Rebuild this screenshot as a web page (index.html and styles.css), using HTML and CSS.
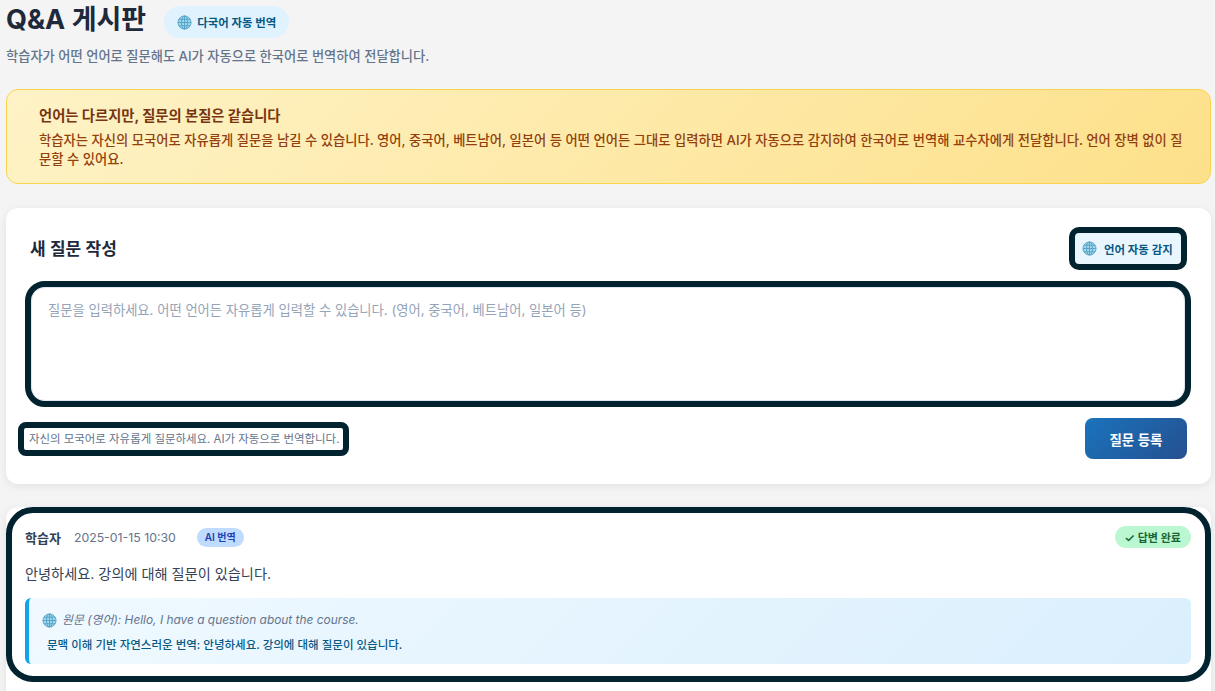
FILE: index.html
```html
<!DOCTYPE html>
<html lang="ko">
<head>
    <meta charset="UTF-8">
    <meta name="viewport" content="width=device-width, initial-scale=1.0">
    <title>Q&amp;A 게시판</title>
    <link rel="stylesheet" href="styles.css">
</head>
<body>
    <svg class="defs" width="0" height="0" aria-hidden="true">
        <symbol id="globe" viewBox="0 0 16 16">
            <circle cx="8" cy="8" r="7" fill="#9ed6ea"/>
            <g fill="none" stroke="#4f9fc4" stroke-width="0.9">
                <circle cx="8" cy="8" r="7"/>
                <ellipse cx="8" cy="8" rx="3.2" ry="7"/>
                <path d="M8 1v14M1 8h14M2 4.5h12M2 11.5h12"/>
            </g>
        </symbol>
    </svg>

    <div class="page">
        <header class="page-head">
            <div class="title-row">
                <h1>Q&amp;A 게시판</h1>
                <span class="pill pill-title"><svg class="globe"><use href="#globe"/></svg>다국어 자동 번역</span>
            </div>
            <p class="subtitle">학습자가 어떤 언어로 질문해도 AI가 자동으로 한국어로 번역하여 전달합니다.</p>
        </header>

        <div class="notice">
            <strong>언어는 다르지만, 질문의 본질은 같습니다</strong>
            <p>학습자는 자신의 모국어로 자유롭게 질문을 남길 수 있습니다. 영어, 중국어, 베트남어, 일본어 등 어떤 언어든 그대로 입력하면 AI가 자동으로 감지하여 한국어로 번역해 교수자에게 전달합니다. 언어 장벽 없이 질문할 수 있어요.</p>
        </div>

        <section class="card form-card">
            <div class="form-head">
                <h2>새 질문 작성</h2>
                <span class="pill pill-detect outlined"><svg class="globe"><use href="#globe"/></svg>언어 자동 감지</span>
            </div>
            <textarea class="question-input outlined" placeholder="질문을 입력하세요. 어떤 언어든 자유롭게 입력할 수 있습니다. (영어, 중국어, 베트남어, 일본어 등)"></textarea>
            <div class="form-foot">
                <span class="hint outlined">자신의 모국어로 자유롭게 질문하세요. AI가 자동으로 번역합니다.</span>
                <button class="submit">질문 등록</button>
            </div>
        </section>

        <section class="card question-card">
            <div class="question-inner">
                <div class="question-meta">
                    <span class="author">학습자</span>
                    <span class="date">2025-01-15 10:30</span>
                    <span class="ai-tag">AI 번역</span>
                    <span class="status"><span class="check">✓</span>답변 완료</span>
                </div>
                <p class="question-text">안녕하세요. 강의에 대해 질문이 있습니다.</p>
                <div class="translation">
                    <p class="original"><svg class="globe"><use href="#globe"/></svg>원문 (영어): Hello, I have a question about the course.</p>
                    <p class="translated">문맥 이해 기반 자연스러운 번역: 안녕하세요. 강의에 대해 질문이 있습니다.</p>
                </div>
            </div>
        </section>
    </div>
</body>
</html>
```

FILE: styles.css
```css
* {
    box-sizing: border-box;
}
html, body {
    height: 100%;
    overflow: hidden;
}
body {
    margin: 0;
    background: #f4f4f5;
    font-family: Inter, "Noto Sans CJK KR", sans-serif;
    color: #1f2937;
}
p, h1, h2 {
    margin: 0;
}
.defs {
    position: absolute;
}
.page {
    padding: 0 4px 0 6px;
}
.page-head {
    padding-top: 1px;
}
.title-row {
    display: flex;
    align-items: center;
    gap: 18px;
}
h1 {
    font-size: 27px;
    line-height: 32px;
    font-weight: 700;
    color: #1e293b;
}
.subtitle {
    margin-top: 8px;
    font-size: 13.25px;
    line-height: 20px;
    font-weight: 500;
    color: #64748b;
}
.globe {
    width: 15px;
    height: 15px;
    flex: none;
}
.pill {
    display: inline-flex;
    align-items: center;
    font-size: 11.4px;
    font-weight: 600;
    color: #075985;
    background: #e0f2fe;
    border-radius: 16px;
}
.pill-title {
    height: 32px;
    padding: 0 13px;
    gap: 5px;
    margin-top: 5px;
}
.notice {
    margin-top: 23px;
    height: 95px;
    padding: 16px 24px 0 32px;
    background: linear-gradient(135deg, #fef3c7, #fde08a);
    border: 1px solid #fcd34d;
    border-radius: 12px;
    color: #92400e;
    font-size: 13.3px;
}
.notice strong {
    display: block;
    margin-bottom: 5px;
    font-size: 14.3px;
    line-height: 20px;
    color: #78350f;
    font-weight: 700;
}
.notice p {
    line-height: 18.6px;
    font-weight: 500;
}
.card {
    background: #fff;
    border-radius: 12px;
    box-shadow: 0 2px 8px rgba(0, 0, 0, 0.08);
}
.form-card {
    margin-top: 24px;
    height: 276px;
    padding: 18px 24px 0 25px;
}
.form-head {
    display: flex;
    justify-content: space-between;
    align-items: center;
    height: 42px;
    margin-bottom: 19px;
    padding-top: 1px;
}
.form-head h2 {
    margin-left: -1px;
    font-size: 17px;
    font-weight: 600;
    color: #1e293b;
}
.outlined {
    outline: 6px solid #01222f;
}
.pill-detect {
    height: 31px;
    width: 106px;
    padding: 0 0 0 7px;
    gap: 7px;
    border-radius: 4px;
    margin: 2px 6px 0 0;
    background: #eaf6fe;
}
.question-input {
    display: block;
    width: 1154px;
    height: 114px;
    padding: 12px 16px;
    border: 1px solid #e2e8f0;
    border-radius: 14px;
    resize: none;
    font-family: inherit;
    font-size: 13.3px;
    line-height: 20px;
    background: #fff;
}
.question-input::placeholder {
    color: #94a3b8;
}
.form-foot {
    display: flex;
    justify-content: space-between;
    align-items: center;
    margin-top: 17px;
    margin-left: -7px;
}
.hint {
    padding: 0 4px 0 5px;
    height: 22px;
    line-height: 22px;
    font-size: 11.45px;
    color: #64748b;
    border-radius: 2px;
}
.submit {
    width: 102px;
    height: 41px;
    border: none;
    border-radius: 8px;
    background: linear-gradient(135deg, #1a73bd, #25508f);
    color: #fff;
    font-family: inherit;
    font-size: 13.5px;
    font-weight: 600;
}
.question-card {
    margin-top: 23px;
    height: 200px;
}
.question-inner {
    height: 175px;
    padding: 13px 14px 0 13px;
    border: 6px solid #01222f;
    border-radius: 27px;
}
.question-meta {
    display: flex;
    align-items: center;
    height: 22px;
    font-size: 13px;
}
.author {
    font-weight: 600;
    color: #334155;
}
.date {
    margin-left: 13px;
    font-size: 12.3px;
    color: #64748b;
}
.ai-tag {
    margin-left: 21px;
    padding: 0 8px;
    height: 19px;
    line-height: 19px;
    border-radius: 10px;
    background: #bfdbfe;
    color: #1e40af;
    font-size: 10px;
    font-weight: 600;
}
.status {
    display: flex;
    align-items: center;
    gap: 3px;
    margin-left: auto;
    height: 22px;
    padding: 0 10px 0 9px;
    border-radius: 11px;
    background: #bbf7d0;
    color: #166534;
    font-size: 11px;
    font-weight: 600;
}
.check {
    font-size: 12px;
}
.question-text {
    margin-top: 14px;
    font-size: 14.2px;
    line-height: 24px;
    color: #334155;
}
.translation {
    margin-top: 12px;
    height: 66px;
    padding: 13px 12px 0 12px;
    border-left: 4px solid #0ea5e9;
    border-radius: 6px;
    background: linear-gradient(135deg, #f0f9ff, #daeffd);
}
.original {
    display: flex;
    align-items: center;
    gap: 5px;
    margin-left: 1px;
    font-size: 11.9px;
    line-height: 18px;
    font-style: italic;
    color: #64748b;
}
.translated {
    margin-top: 8px;
    margin-left: 6px;
    font-size: 11.5px;
    line-height: 16px;
    font-weight: 500;
    color: #075985;
}
```
